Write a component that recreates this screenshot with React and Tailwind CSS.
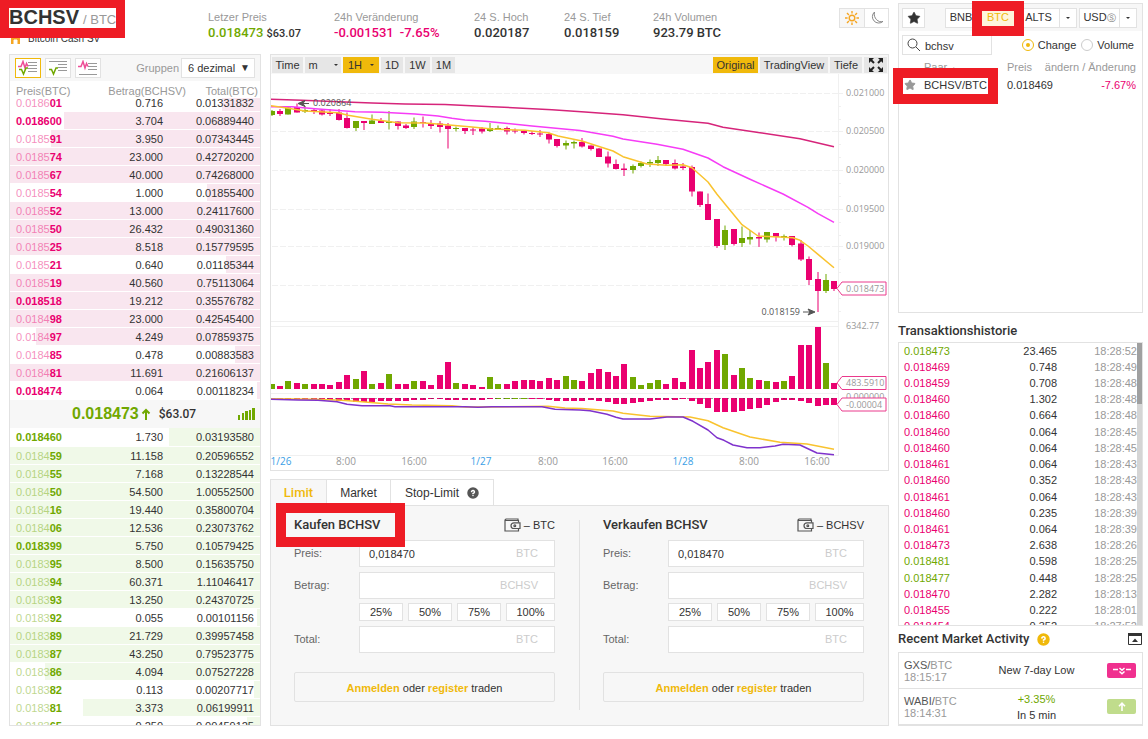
import { useState } from 'react'
import { Star, HelpCircle } from 'lucide-react'

// ── Data ──────────────────────────────────────────────────────────────────────
// [price, amount, total, isRound]
const ASKS = [
  ['0.018601', '0.716', '0.01331832'],
  ['0.018600', '3.704', '0.06889440', true],
  ['0.018591', '3.950', '0.07343445'],
  ['0.018574', '23.000', '0.42720200'],
  ['0.018567', '40.000', '0.74268000'],
  ['0.018554', '1.000', '0.01855400'],
  ['0.018552', '13.000', '0.24117600'],
  ['0.018550', '26.432', '0.49031360'],
  ['0.018525', '8.518', '0.15779595'],
  ['0.018521', '0.640', '0.01185344'],
  ['0.018519', '40.560', '0.75113064'],
  ['0.018518', '19.212', '0.35576782', true],
  ['0.018498', '23.000', '0.42545400'],
  ['0.018497', '4.249', '0.07859375'],
  ['0.018485', '0.478', '0.00883583'],
  ['0.018481', '11.691', '0.21606137'],
  ['0.018474', '0.064', '0.00118234', true],
]

const BIDS = [
  ['0.018460', '1.730', '0.03193580', true],
  ['0.018459', '11.158', '0.20596552'],
  ['0.018455', '7.168', '0.13228544'],
  ['0.018450', '54.500', '1.00552500'],
  ['0.018416', '19.440', '0.35800704'],
  ['0.018406', '12.536', '0.23073762'],
  ['0.018399', '5.750', '0.10579425', true],
  ['0.018395', '8.500', '0.15635750'],
  ['0.018394', '60.371', '1.11046417'],
  ['0.018393', '13.250', '0.24370725'],
  ['0.018392', '0.055', '0.00101156'],
  ['0.018389', '21.729', '0.39957458'],
  ['0.018387', '43.250', '0.79523775'],
  ['0.018386', '4.094', '0.07527228'],
  ['0.018382', '0.113', '0.00207717'],
  ['0.018381', '3.373', '0.06199911'],
  ['0.018365', '0.250', '0.00459125'],
]

const TRADES = [
  ['0.018473', '23.465', '18:28:52', 'up'],
  ['0.018469', '0.748', '18:28:49'],
  ['0.018459', '0.708', '18:28:48'],
  ['0.018460', '1.302', '18:28:48'],
  ['0.018460', '0.664', '18:28:48'],
  ['0.018460', '0.064', '18:28:45'],
  ['0.018460', '0.064', '18:28:45'],
  ['0.018461', '0.064', '18:28:43'],
  ['0.018460', '0.352', '18:28:43'],
  ['0.018461', '0.064', '18:28:43'],
  ['0.018460', '0.235', '18:28:39'],
  ['0.018461', '0.064', '18:28:39'],
  ['0.018473', '2.638', '18:28:26'],
  ['0.018481', '0.598', '18:28:25', 'up'],
  ['0.018477', '0.448', '18:28:25', 'up'],
  ['0.018470', '2.282', '18:28:13'],
  ['0.018455', '0.222', '18:28:01'],
  ['0.018454', '0.352', '18:27:52'],
]

// [up, high, bodyTop, bodyBottom, low, volume, macd] in chart units
const CANDLES = [
  [1, 110, 111, 115, 116, 5, 1], [0, 109, 111, 114, 116, 3, 1], [1, 107, 107.5, 114.5, 114.5, 8, 1],
  [0, 103.5, 107, 112.5, 112.5, 6, 1], [1, 106, 110, 111.5, 113, 5, 1], [0, 108, 110, 111.5, 114, 5, 2],
  [0, 110, 110.5, 114.5, 115.5, 5, 2], [0, 109, 113, 114, 116, 4, 2], [0, 109, 112.5, 120, 120.5, 7, 3],
  [0, 112.5, 118, 128, 128.5, 14, 3], [1, 121, 121, 128, 131, 10, 4], [0, 121, 121, 123, 130, 18, 4],
  [1, 114.5, 120.5, 124, 124, 5, 4], [0, 118, 121, 123, 123, 6, 3], [1, 111, 121.5, 123, 129.5, 15, 3],
  [0, 121.5, 121.5, 126, 129.5, 5, 3], [0, 124, 125.5, 128, 129, 5, 3], [1, 117.5, 121.5, 127, 129, 8, 2],
  [0, 116.5, 122, 123, 127.5, 8, 2], [0, 120, 123, 126, 129, 4, 1], [0, 121, 123.5, 127, 132.5, 14, 1],
  [0, 123, 125.5, 129, 148.5, 27, 2], [1, 126.5, 128, 129, 131.5, 6, 2], [0, 128, 128, 131, 134, 5, 2],
  [0, 127.5, 129.5, 130.5, 135, 4, 2], [0, 127, 128.5, 131.5, 133.5, 2, 2], [1, 123, 128, 131, 132, 12, 1],
  [1, 125.5, 128, 130, 130, 5, 1], [0, 126.5, 128, 131.5, 134.5, 5, 1], [0, 128.5, 130.5, 131.5, 133.5, 8, 1],
  [0, 130, 131, 133, 134.5, 9, 1], [0, 131, 133, 134, 135, 9, 1], [0, 130, 133.5, 134.5, 137, 8, 1],
  [0, 132.5, 134, 139.5, 143.5, 11, 2], [0, 139, 139, 146, 147.5, 9, 3], [1, 140.5, 143, 145.5, 149.5, 13, 3],
  [1, 140.5, 142, 143.5, 148.5, 9, 3], [0, 138, 142, 146.5, 147.5, 8, 3], [0, 145.5, 145.5, 149, 150.5, 16, 2],
  [0, 148, 148.5, 157, 157, 20, 3], [0, 151.5, 156.5, 163.5, 167.5, 17, 4], [0, 159.5, 164, 169, 169.5, 13, 6],
  [0, 163.5, 168.5, 170, 176, 25, 6], [1, 164.5, 166, 170, 173.5, 12, 5], [1, 161.5, 163, 166, 167.5, 4, 4],
  [1, 159.5, 162, 163.5, 167, 6, 3], [1, 156, 160, 163, 166, 9, 2], [0, 160, 160, 164, 166, 5, 2],
  [0, 159.5, 163, 168.5, 169.5, 11, 2], [0, 163, 166.5, 168, 170, 7, 1], [0, 165.5, 167, 191.5, 196.5, 39, 3],
  [0, 191.5, 191.5, 205, 207, 21, 6], [0, 193.5, 204, 220, 220, 27, 10], [0, 219, 219, 246, 248, 39, 14],
  [1, 225.5, 230, 245, 250, 35, 14], [0, 229, 229, 244, 245.5, 14, 14], [1, 226.5, 238, 243, 247, 21, 13],
  [1, 230, 237, 239.5, 244.5, 11, 11], [0, 232.5, 237, 238.5, 247, 9, 10], [1, 232, 232, 239.5, 242.5, 8, 7],
  [0, 233, 233, 237, 241.5, 7, 4], [1, 234.5, 236, 237.5, 240.5, 8, 2], [0, 236, 236, 245, 246.5, 13, 2],
  [0, 240, 243.5, 259.5, 261, 44, 3], [0, 256.5, 259, 280, 285, 44, 5], [0, 272, 279, 291, 312, 62, 8],
  [1, 274, 280, 291, 293, 26, 7], [0, 281, 281, 289, 291, 6, 7],
]

const MA_LONG =
  '271,99.3 302,100.3 345,102 372,103 405,104 445,104.5 492,106.7 552,109.7 585,112 623,114.7 663,119 708,123.3 723,127.3 760,132.7 800,138.7 834,146.7'
const MA_MID =
  '271,106.7 292,106.7 315,108.7 355,111.7 382,112.3 415,114 438,116 452,118.3 465,120 485,121.3 532,126 580,130.5 613,136.3 623,139 657,144.3 683,149.3 708,158 723,166.7 750,179.3 783,194 808,207.3 818,213.7 834,222.3'
const MA_SHORT =
  '271,105.7 285,107.7 305,111 338,112.7 348,115.3 372,119.3 398,122.7 425,123 452,125.3 472,127 492,129 525,130.3 548,132.7 558,136 582,141 613,151 623,156.7 647,164 667,165.3 683,164.7 692,167.7 708,182 717,194.3 742,224.7 758,236 780,237 793,237.7 800,240.3 808,246 818,254.3 834,267.7'
const MACD_SIGNAL =
  '271,398.7 315,399.3 342,400.3 365,402 388,404 412,405 452,405.7 465,407 482,407 548,406.3 565,408 582,408.5 613,411 623,413.3 650,416.3 690,417 708,420.7 723,427.7 750,437 780,442.3 807,444 834,449.3'
const MACD_LINE =
  '271,399.3 298,400 318,400.3 337,401.7 347,404.3 362,405.7 390,405.7 395,406.7 465,406.7 478,407.3 492,406.7 542,406.7 555,409.3 580,410 590,410.7 607,414.3 616,417.3 623,419 650,419 667,417 683,417 693,421.3 708,430 717,437.7 724,440.3 733,445 747,447.7 760,447.7 775,446 783,444.3 800,445 817,453 834,454.7'

const PRICE_TICKS = [
  ['0.021000', 93], ['0.020500', 131], ['0.020000', 170], ['0.019500', 209], ['0.019000', 246], ['', 285],
]

const TIME_TICKS = [
  ['1/26', 280, true], ['8:00', 346], ['16:00', 414], ['1/27', 481, true],
  ['8:00', 548], ['16:00', 615], ['1/28', 683, true], ['8:00', 749], ['16:00', 817],
]

const UP = '#70a800'
const DOWN = '#ea0070'

// ── Header ────────────────────────────────────────────────────────────────────
function Stat({ label, className, children }) {
  return (
    <div className={className}>
      <div className="text-[11px] leading-4 text-[#999]">{label}</div>
      <div className="font-[Roboto,sans-serif] text-[13px] leading-4 font-medium whitespace-nowrap">{children}</div>
    </div>
  )
}

function Header() {
  return (
    <header className="flex h-[54px] items-start">
      <div className="w-[199px] shrink-0 pt-[5px]">
        <h1 className="leading-6 whitespace-nowrap">
          <span className="text-[20px] font-bold">BCHSV</span>
          <span className="ml-1 text-[13px] text-[#999]">/ BTC</span>
        </h1>
        <div className="flex h-3 items-center gap-2 pl-[2px] text-[10px] text-[#333]">
          <svg viewBox="0 0 9 11" className="h-[11px] w-[9px]">
            <rect x="0" y="0" width="9" height="11" fill="#f5a623" />
            <path d="M3.5 0v4M5.5 0v4M3 7h3v4H3z" stroke="#fff" strokeWidth="1" fill="#fff" />
          </svg>
          Bitcoin Cash SV
        </div>
      </div>

      <div className="flex flex-1 pt-[9px]">
        <Stat label="Letzer Preis" className="w-[126px]">
          <span className="text-[#70a800]">0.018473</span> <span className="text-[11px]">$63.07</span>
        </Stat>
        <Stat label="24h Veränderung" className="w-[140px]">
          <span className="text-[#ea0070]">-0.001531</span>
          <span className="ml-[6px] text-[#ea0070]">-7.65%</span>
        </Stat>
        <Stat label="24 S. Hoch" className="w-[90px]">0.020187</Stat>
        <Stat label="24 S. Tief" className="w-[89px]">0.018159</Stat>
        <Stat label="24h Volumen">923.79 BTC</Stat>
      </div>

      <div className="mt-2 flex h-5 border border-[#e2e2e2]">
        <button aria-label="Light mode" className="flex w-6 items-center justify-center bg-[#f7f7f7]">
          <svg viewBox="0 0 14 14" className="size-[14px]" fill="none" stroke="#f5a623" strokeWidth="1.4">
            <circle cx="7" cy="7" r="2.8" />
            <path d="M7 0v2.6M7 11.4V14M0 7h2.6M11.4 7H14M2 2l1.9 1.9M10.1 10.1 12 12M12 2l-1.9 1.9M3.9 10.1 2 12" />
          </svg>
        </button>
        <button aria-label="Dark mode" className="flex w-6 items-center justify-center border-l border-[#e2e2e2] bg-white">
          <svg viewBox="0 0 14 14" className="size-[14px]" fill="none" stroke="#888" strokeWidth="1">
            <path d="M4.5 1A6.300 6.300 0 1 0 13 10.400C8.500 12.200 3 7 4.500 1z" />
          </svg>
        </button>
      </div>
    </header>
  )
}

// ── Order book ────────────────────────────────────────────────────────────────
function DepthIcon({ ask, bid }) {
  const short = ask && bid ? 'M10 2.500h9M10 5.500h9M10 8.500h9M10 11.500h9' : ask ? 'M10 3.500h9M10 6.500h9M10 9.500h9' : 'M10 4.500h9M10 7.500h9M10 10.500h9'
  const long = ask && bid ? '' : ask ? 'M1 14.500h18' : 'M1 1.500h18'
  return (
    <svg viewBox="0 0 20 16" className="h-4 w-5" fill="none">
      <path d={short + long} stroke="#999" strokeWidth="1" />
      {ask && <path d="M0 6.500h3l2-5 2 6.500 1.500-4.500 1.500 3" stroke="#ee4f97" strokeWidth="1.500" />}
      {bid && <path d="M1 9.500h2.500l2 4.500 2.500-6h2" stroke={UP} strokeWidth="1.500" />}
    </svg>
  )
}

function BookTable({ rows, side }) {
  const ask = side === 'ask'
  const tint = ask ? '#f9e6ef' : '#f0f9e8'
  return (
    <table className="w-full shrink-0 text-[11px]">
      <tbody>
        {rows.map(([price, amount, total, round]) => {
          const depth = Math.min(100, Number(total) * 1140)
          return (
            <tr
              key={price}
              className="h-[18px]"
              style={{ background: `linear-gradient(to left, ${tint} ${depth}%, transparent ${depth}%)` }}
            >
              <td className={`w-[60px] border-b border-white pt-[2px] pl-[6px] leading-none ${ask ? 'text-[#ea0070]' : 'text-[#70a800]'}`}>
                <span className={round ? 'font-bold' : 'opacity-45'}>{price.slice(0, 6)}</span>
                <span className="font-bold">{price.slice(6)}</span>
              </td>
              <td className="border-b border-white pt-[2px] text-right leading-none">{amount}</td>
              <td className="w-[97px] border-b border-white pt-[2px] pr-[6px] text-right leading-none">{total}</td>
            </tr>
          )
        })}
      </tbody>
    </table>
  )
}

function OrderBook() {
  return (
    <section className="w-[252px] shrink-0 border border-[#e2e2e2]">
      <div className="flex h-[26px] items-center bg-[#f7f7f7] px-[5px]">
        <div className="flex gap-1">
          <button aria-label="Both sides" className="flex h-5 w-[26px] items-center justify-center border border-[#f0b90b] bg-white">
            <DepthIcon ask bid />
          </button>
          <button aria-label="Bids only" className="flex h-5 w-[26px] items-center justify-center border border-[#e2e2e2] bg-white">
            <DepthIcon bid />
          </button>
          <button aria-label="Asks only" className="flex h-5 w-[26px] items-center justify-center border border-[#e2e2e2] bg-white">
            <DepthIcon ask />
          </button>
        </div>
        <label htmlFor="group" className="mr-[2px] ml-auto text-[11px] text-[#999]">Gruppen</label>
        <div className="relative">
          <select id="group" className="block h-5 w-[74px] appearance-none border border-[#e2e2e2] bg-white pl-[6px] text-[11px]">
            <option>6 dezimal</option>
          </select>
          <span className="pointer-events-none absolute top-0 right-[5px] text-[10px] leading-5">▼</span>
        </div>
      </div>

      <div className="flex h-[17px] overflow-hidden pr-[2px] pl-[6px] text-[11px] leading-[20px] text-[#999]">
        <span className="w-[70px]">Preis(BTC)</span>
        <span className="flex-1 text-right">Betrag(BCHSV)</span>
        <span className="w-[72px] text-right">Total(BTC)</span>
      </div>
      <div className="flex h-[302px] flex-col justify-end overflow-hidden">
        <BookTable rows={ASKS} side="ask" />
      </div>

      <div className="flex h-7 items-center bg-[#f7f7f7] pr-[5px] pl-[62px]">
        <span className="text-[16px] font-bold text-[#70a800]">0.018473</span>
        <svg viewBox="0 0 10 12" className="ml-[2px] h-3 w-[10px]" fill="none" stroke={UP} strokeWidth="2">
          <path d="M5 12V2M1.500 5.500 5 2l3.500 3.500" />
        </svg>
        <span className="ml-2 font-[Roboto,sans-serif] text-[12px] font-medium">$63.07</span>
        <svg viewBox="0 0 17 12" className="ml-auto h-3 w-[17px]" fill={UP}>
          <path d="M0 7h2v5H0zM4 5h2v7H4zM7 3h3v9H7zM11 2h2v10h-2zM14 0h3v12h-3z" />
        </svg>
      </div>

      <div className="h-[297px] overflow-hidden">
        <BookTable rows={BIDS} side="bid" />
      </div>
    </section>
  )
}

// ── Chart ─────────────────────────────────────────────────────────────────────
function PriceTag({ y, text }) {
  return (
    <g>
      <path d={`M837 ${y}l5-6.5h44v13h-44z`} fill="#fff" stroke="#ea3a8c" strokeWidth="1" />
      <text x="846" y={y + 3} fontSize="9" fill="#999">{text}</text>
    </g>
  )
}

function CandleChart() {
  return (
    <svg viewBox="271 74 617 396" className="block w-full font-['Open_Sans','Noto_Sans',sans-serif]">
      <g stroke="#f0f0f0" fill="none">
        <path d="M271 321.500H838.500M271 326.500H838.500M271 393.500H838.500M271 455.500H838.500M838.500 74V456" />
        {PRICE_TICKS.map(([label, y]) => (
          <path key={y} d={`M272 ${y + 0.5}H838`} strokeDasharray="6 2" />
        ))}
        {PRICE_TICKS.map(([label, y]) => (
          <path key={y} d={`M839 ${y + 0.5}h4M839 ${y + 13.5}h2M839 ${y + 26.5}h2`} />
        ))}
      </g>

      <g fontSize="9" fill="#999">
        {PRICE_TICKS.map(([label, y]) => (
          <text key={y} x="846" y={y + 3}>{label}</text>
        ))}
        <text x="846" y="329">6342.77</text>
        <text x="846" y="400">0.000000</text>
      </g>

      {/* Candles, volume and MACD histogram share the same slots */}
      {CANDLES.map(([up, high, top, bottom, low, vol, macd], i) => {
        const x = Math.round(271.5 + i * 8.4)
        const fill = up ? UP : DOWN
        const left = Math.max(271, x - 3)
        const width = x + 3 - left
        return (
          <g key={i} fill={fill}>
            <rect x={x - 0.5} y={high} width="1" height={Math.max(1, low - high)} />
            <rect x={left} y={top} width={width} height={bottom - top} />
            <rect x={left} y={389 - vol} width={width} height={vol} />
            <rect x={left} y="398" width={width} height={macd} fill={i > 26 && i < 31 ? UP : DOWN} />
          </g>
        )
      })}
      <path d="M271 398.500H838" stroke="#444" strokeWidth="0.5" strokeDasharray="2 6" />

      <g fill="none" strokeWidth="1.5" strokeLinejoin="round">
        <polyline points={MA_LONG} stroke="#d6247a" />
        <polyline points={MA_MID} stroke="#f63cf6" />
        <polyline points={MA_SHORT} stroke="#f9c32f" />
        <polyline points={MACD_SIGNAL} stroke="#f9c32f" />
        <polyline points={MACD_LINE} stroke="#7f32cc" />
      </g>

      {/* High / low markers */}
      <g stroke="#555" fill="#555">
        <path d="M299 103.500h10" />
        <path d="M298 103.500l7-3-2 3 2 3z" />
        <path d="M803 312h10" />
        <path d="M815 312l-7-3 2 3-2 3z" />
      </g>
      <g fontSize="9" fill="#555">
        <text x="313" y="106">0.020864</text>
        <text x="800" y="315" textAnchor="end">0.018159</text>
      </g>

      <PriceTag y={288.5} text="0.018473" />
      <PriceTag y={383} text="483.5910" />
      <PriceTag y={404.5} text="-0.00004" />

      <g fontSize="10" textAnchor="middle">
        {TIME_TICKS.map(([label, x, day]) => (
          <text key={x} x={day && x < 300 ? x + 1 : x} y="465" fill={day ? '#3ba0e6' : '#999'}>{label}</text>
        ))}
      </g>
    </svg>
  )
}

function ToolButton({ active, className = '', children, ...props }) {
  return (
    <button
      {...props}
      className={`flex h-4 items-center justify-center text-[11px] leading-4 ${active ? 'bg-[#f0b90b]' : 'bg-[#e6e6e6]'} ${className}`}
    >
      {children}
    </button>
  )
}

function Caret() {
  return <span className="h-0 w-0 border-x-[2px] border-t-[2px] border-x-transparent border-t-[#333]" />
}

function ChartPanel() {
  return (
    <section className="border border-[#e2e2e2]">
      <div className="flex h-[19px] items-center gap-[2px] bg-[#f7f7f7] px-px">
        <ToolButton className="w-[31px]">Time</ToolButton>
        <ToolButton className="w-9 gap-4">m <Caret /></ToolButton>
        <ToolButton active className="w-9 gap-2">1H <Caret /></ToolButton>
        <ToolButton className="w-[22px]">1D</ToolButton>
        <ToolButton className="w-[25px]">1W</ToolButton>
        <ToolButton className="w-[23px]">1M</ToolButton>
        <ToolButton active className="ml-auto w-[45px]">Original</ToolButton>
        <ToolButton className="w-[68px]">TradingView</ToolButton>
        <ToolButton className="w-8">Tiefe</ToolButton>
        <ToolButton aria-label="Fullscreen" className="w-[23px]">
          <svg viewBox="0 0 14 14" className="size-[14px]" fill="#222" stroke="#222" strokeWidth="2">
            <path d="M1 1l4 4M13 1 9 5M1 13l4-4M13 13 9 9" />
            <path stroke="none" d="M0 0h5L0 5zM14 0H9l5 5zM0 14h5L0 9zM14 14H9l5-5z" />
          </svg>
        </ToolButton>
      </div>
      <CandleChart />
    </section>
  )
}

// ── Order form ────────────────────────────────────────────────────────────────
function FormField({ id, label, unit, defaultValue }) {
  return (
    <div className="flex items-center">
      <label htmlFor={id} className="w-[65px] text-[11px] text-[#666]">{label}</label>
      <div className="relative flex-1">
        <input
          id={id}
          defaultValue={defaultValue}
          className="block h-[27px] w-full border border-[#e2e2e2] bg-white pr-14 pl-[9px] text-[11px] outline-none"
        />
        <span className="pointer-events-none absolute top-0 right-[17px] text-[11px] leading-[27px] text-[#ccc]">{unit}</span>
      </div>
    </div>
  )
}

function OrderForm({ id, title, balance }) {
  return (
    <form className="flex-1 pr-6 pl-[23px]">
      <div className="flex h-5 items-center justify-between">
        <h2 className="font-[Roboto,sans-serif] text-[13px] font-medium">{title}</h2>
        <span className="flex items-center gap-[3px] text-[11px]">
          <svg viewBox="0 0 17 14" className="h-[14px] w-[17px]" fill="none" stroke="#555" strokeWidth="1.2">
            <path d="M14.500 4.500V2.500H1.500M14 2.500v-1.500H2L1 2v11h13.500V10.500" />
            <path d="M16 4.800H10c-1.800 0-3 1.200-3 2.900s1.200 2.800 3 2.800h6z" />
            <circle cx="10.800" cy="7.700" r="0.9" />
          </svg>
          – {balance}
        </span>
      </div>
      <div className="mt-[5px] flex flex-col gap-[5px]">
        <FormField id={`${id}-price`} label="Preis:" unit="BTC" defaultValue="0,018470" />
        <FormField id={`${id}-amount`} label="Betrag:" unit="BCHSV" />
      </div>
      <div className="mt-1 mb-[5px] ml-[65px] grid grid-cols-[1fr_1fr_1fr_49px] gap-[5px]">
        {['25%', '50%', '75%', '100%'].map((p) => (
          <button key={p} type="button" className="h-[18px] border border-[#e2e2e2] bg-white text-[11px] leading-none">
            {p}
          </button>
        ))}
      </div>
      <FormField id={`${id}-total`} label="Total:" unit="BTC" />
      <div className="mt-[19px] h-[30px] rounded-[2px] border border-[#e2e2e2] text-center text-[11px] leading-[30px]">
        <a href="#login" className="font-bold text-[#f0b90b]">Anmelden</a> oder{' '}
        <a href="#register" className="font-bold text-[#f0b90b]">register</a> traden
      </div>
    </form>
  )
}

function TradePanel() {
  return (
    <section className="mt-2">
      <div className="flex">
        <button className="z-10 -mb-px h-[27px] w-[57px] border border-b-0 border-[#e2e2e2] bg-[#f7f7f7] font-[Roboto,sans-serif] text-[13px] font-medium text-[#f0b90b]">
          Limit
        </button>
        <button className="h-[26px] w-[64px] border-t border-r border-[#e2e2e2] text-[12px]">Market</button>
        <button className="flex h-[26px] w-[103px] items-center justify-center gap-2 border-t border-r border-[#e2e2e2] text-[12px]">
          Stop-Limit
          <HelpCircle className="size-3 fill-[#555] text-[#555] [&>path]:stroke-white" strokeWidth={3} />
        </button>
      </div>
      <div className="flex border border-[#e2e2e2] bg-[#f7f7f7] pt-[9px] pb-[23px]">
        <OrderForm id="buy" title="Kaufen BCHSV" balance="BTC" />
        <div className="mt-[5px] -mb-2 w-px bg-[#e2e2e2]" />
        <OrderForm id="sell" title="Verkaufen BCHSV" balance="BCHSV" />
      </div>
    </section>
  )
}

// ── Market list ───────────────────────────────────────────────────────────────
function MarketList() {
  const [sort, setSort] = useState('change')

  const radio =
    'relative size-3 appearance-none rounded-full border border-[#ccc] bg-white checked:border-[#f0b90b] checked:after:absolute checked:after:inset-[3px] checked:after:rounded-full checked:after:bg-[#f0b90b]'

  return (
    <section className="mt-[3px] h-[310px] border border-[#e2e2e2] text-[11px]">
      <div className="flex h-[27px] items-center bg-[#f7f7f7] pr-[5px] pl-[3px]">
        <button aria-label="Favorites" className="flex h-5 w-[23px] items-center justify-center border border-[#e2e2e2] bg-white">
          <Star className="size-[14px] fill-[#333] text-[#333]" strokeWidth={1} />
        </button>
        <div className="ml-auto flex h-5 items-stretch">
          <button className="w-8 border border-[#e2e2e2] bg-white">BNB</button>
          <button className="ml-1 w-[34px] border border-[#f0b90b] bg-[#fef5dc] text-[#f0b90b]">BTC</button>
          <button className="ml-[2px] w-[43px] border border-[#e2e2e2] bg-white">ALTS</button>
          <button aria-label="More alts" className="flex w-[17px] items-center justify-center border border-l-0 border-[#e2e2e2] bg-white"><Caret /></button>
          <button className="ml-[2px] w-[41px] border border-[#e2e2e2] bg-white whitespace-nowrap">
            USD<span className="text-[9px] text-[#777]">Ⓢ</span>
          </button>
          <button aria-label="More stable coins" className="flex w-[17px] items-center justify-center border border-l-0 border-[#e2e2e2] bg-white"><Caret /></button>
        </div>
      </div>

      <div className="mt-1 flex items-center pr-[8px] pl-[3px]">
        <div className="relative">
          <svg viewBox="0 0 14 14" className="absolute top-[3px] left-[5px] size-[14px]" fill="none" stroke="#444">
            <circle cx="5.500" cy="5.500" r="4.500" />
            <path d="M9 9l4 4" />
          </svg>
          <input aria-label="Search" defaultValue="bchsv" className="block h-5 w-[90px] border border-[#e2e2e2] pt-[2px] pl-[22px] outline-none" />
        </div>
        <label className="ml-auto flex items-center gap-1">
          <input type="radio" name="sort" className={radio} checked={sort === 'change'} onChange={() => setSort('change')} />
          Change
        </label>
        <label className="ml-[5px] flex items-center gap-1">
          <input type="radio" name="sort" className={radio} checked={sort === 'volume'} onChange={() => setSort('volume')} />
          Volume
        </label>
      </div>

      <table className="mt-[3px] w-full table-fixed">
        <thead>
          <tr className="h-[18px] text-[#999]">
            <th className="w-[108px] pl-[25px] text-left font-normal leading-none">Paar <span className="text-[7px]">▲</span></th>
            <th className="w-[48px] text-left font-normal leading-none">Preis</th>
            <th className="pr-[6px] font-normal leading-none whitespace-nowrap">
              <div className="flex justify-end">ändern / Änderung</div>
            </th>
          </tr>
        </thead>
        <tbody>
          <tr className="h-[18px]">
            <td className="pl-[5px] leading-none">
              <span className="flex items-center gap-2">
                <Star className="size-3 fill-[#999] text-[#999]" />
                BCHSV/BTC
              </span>
            </td>
            <td className="leading-none">0.018469</td>
            <td className="pr-[6px] text-right leading-none text-[#ea0070]">-7.67%</td>
          </tr>
        </tbody>
      </table>
    </section>
  )
}

// ── Trade history ─────────────────────────────────────────────────────────────
function TradeHistory() {
  return (
    <section className="mt-[9px]">
      <h2 className="font-[Roboto,sans-serif] text-[13px] leading-[17px] font-medium">Transaktionshistorie</h2>
      <div className="relative mt-[3px] h-[284px] overflow-hidden border border-[#e2e2e2]">
        <table className="h-[292px] w-full text-[11px]">
          <tbody>
            {TRADES.map(([price, amount, time, dir], i) => (
              <tr key={i}>
                <td className={`pl-[5px] leading-none ${dir === 'up' ? 'text-[#70a800]' : 'text-[#ea0070]'}`}>{price}</td>
                <td className="text-right leading-none">{amount}</td>
                <td className="w-[85px] pr-[5px] text-right leading-none text-[#999]">{time}</td>
              </tr>
            ))}
          </tbody>
        </table>
        <div className="absolute inset-y-0 right-0 w-[5px] bg-[#d5d5d5]">
          <div className="h-[61px] bg-[#a0a0a0]" />
        </div>
      </div>
    </section>
  )
}

// ── Recent market activity ────────────────────────────────────────────────────
function MarketActivity() {
  return (
    <section className="text-[11px]">
      <div className="flex h-[26px] items-center">
        <h2 className="font-[Roboto,sans-serif] text-[13px] font-medium">Recent Market Activity</h2>
        <HelpCircle className="ml-2 size-[13px] fill-[#f0b90b] text-[#f0b90b] [&>path]:stroke-white" strokeWidth={3} />
        <button aria-label="Collapse" className="mr-px ml-auto">
          <svg viewBox="0 0 14 12" className="h-3 w-[14px]" fill="none">
            <path d="M0.500 0.500h13v11h-13z" stroke="#333" />
            <path d="M0 0h14v3H0zM4 9l3-3.500L10 9z" fill="#333" />
          </svg>
        </button>
      </div>
      <div className="border border-b-2 border-[#e2e2e2]">
        <div className="flex h-9 items-center border-b border-[#e2e2e2] pr-[6px] pl-[5px]">
          <div className="w-[64px] leading-3 text-[#999]">
            <span className="text-[#555]">GXS/</span>BTC<br />18:15:17
          </div>
          <div className="flex-1 text-center">New 7-day Low</div>
          <span className="ml-[2px] flex h-[15px] w-[29px] items-center justify-center rounded-[2px] bg-[#f0308f]">
            <svg viewBox="0 0 18 8" className="h-2 w-[18px]" fill="none" stroke="#fff" strokeWidth="1.5">
              <path d="M0 2.500h5M13 2.500h5M6.500 1 9 3.200 11.500 1M6.500 4.500 9 6.700l2.500-2.200" />
            </svg>
          </span>
        </div>
        <div className="flex h-[35px] items-center pr-[6px] pl-[5px]">
          <div className="w-[64px] leading-3 text-[#999]">
            <span className="text-[#555]">WABI/</span>BTC<br />18:14:31
          </div>
          <div className="flex-1 text-center leading-4">
            <span className="text-[#70a800]">+3.35%</span><br />In 5 min
          </div>
          <span className="ml-[2px] flex h-[15px] w-[29px] items-center justify-center rounded-[2px] bg-[#c0dc8c]">
            <svg viewBox="0 0 8 9" className="h-[9px] w-2" fill="none" stroke="#fff" strokeWidth="1.6">
              <path d="M4 9V1.500M1 4.200l3-3 3 3" />
            </svg>
          </span>
        </div>
      </div>
    </section>
  )
}

// ── Page ──────────────────────────────────────────────────────────────────────
export default function App() {
  return (
    <div className="relative flex gap-[9px] bg-white pr-[5px] pl-[9px] font-['Liberation_Sans',Arial,sans-serif] text-[#333]">
      <div className="min-w-0 flex-1">
        <Header />
        <div className="flex gap-[9px]">
          <OrderBook />
          <div className="relative min-w-0 flex-1">
            <ChartPanel />
            <TradePanel />
            {/* Highlight: buy form */}
            <div className="pointer-events-none absolute top-[449px] left-[6px] z-20 h-[44px] w-[129px] border-[10px] border-[#ee1c25]" />
          </div>
        </div>
      </div>

      <aside className="relative w-[245px] shrink-0">
        <MarketList />
        <TradeHistory />
        <MarketActivity />
        {/* Highlights: BTC market tab and pair */}
        <div className="pointer-events-none absolute top-px left-[74px] h-[35px] w-[52px] border-[10px] border-[#ee1c25]" />
        <div className="pointer-events-none absolute top-[68px] -left-[5px] h-9 w-[105px] border-[10px] border-[#ee1c25]" />
      </aside>

      {/* Highlight: pair name */}
      <div className="pointer-events-none absolute top-0 left-0 h-[38px] w-[125px] border-x-[9px] border-t-8 border-b-[10px] border-[#ee1c25]" />
    </div>
  )
}
